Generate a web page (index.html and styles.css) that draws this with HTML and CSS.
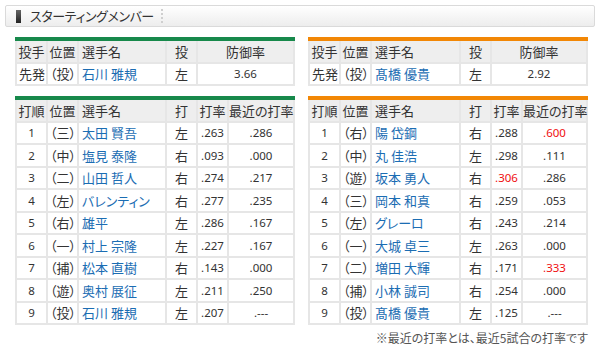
FILE: index.html
```html
<!DOCTYPE html>
<html lang="ja">
<head>
<meta charset="utf-8">
<link rel="stylesheet" href="styles.css">
</head>
<body>
<div class="page">
  <div class="title"><span class="bar"></span><span class="ttl">スターティングメンバー</span><span class="sep"></span></div>
  <div class="cols">
    <div class="col green">
      <table class="tbl">
        <colgroup><col class="w31"><col class="w31"><col class="w88"><col class="w31"><col></colgroup>
        <tr><th>投手</th><th>位置</th><th class="l">選手名</th><th>投</th><th>防御率</th></tr>
        <tr><td class="l">先発</td><td class="l">（投）</td><td class="name">石川 雅規</td><td>左</td><td class="num">3.66</td></tr>
      </table>
      <table class="tbl">
        <colgroup><col class="w31"><col class="w31"><col class="w88"><col class="w31"><col class="w31"><col></colgroup>
        <tr><th>打順</th><th>位置</th><th class="l">選手名</th><th>打</th><th>打率</th><th>最近の打率</th></tr>
        <tr><td class="num">1</td><td class="l">（三）</td><td class="name">太田 賢吾</td><td>左</td><td class="num">.263</td><td class="num">.286</td></tr>
        <tr><td class="num">2</td><td class="l">（中）</td><td class="name">塩見 泰隆</td><td>右</td><td class="num">.093</td><td class="num">.000</td></tr>
        <tr><td class="num">3</td><td class="l">（二）</td><td class="name">山田 哲人</td><td>右</td><td class="num">.274</td><td class="num">.217</td></tr>
        <tr><td class="num">4</td><td class="l">（左）</td><td class="name">バレンティン</td><td>右</td><td class="num">.277</td><td class="num">.235</td></tr>
        <tr><td class="num">5</td><td class="l">（右）</td><td class="name">雄平</td><td>左</td><td class="num">.286</td><td class="num">.167</td></tr>
        <tr><td class="num">6</td><td class="l">（一）</td><td class="name">村上 宗隆</td><td>左</td><td class="num">.227</td><td class="num">.167</td></tr>
        <tr><td class="num">7</td><td class="l">（捕）</td><td class="name">松本 直樹</td><td>右</td><td class="num">.143</td><td class="num">.000</td></tr>
        <tr><td class="num">8</td><td class="l">（遊）</td><td class="name">奥村 展征</td><td>左</td><td class="num">.211</td><td class="num">.250</td></tr>
        <tr><td class="num">9</td><td class="l">（投）</td><td class="name">石川 雅規</td><td>左</td><td class="num">.207</td><td class="num">.---</td></tr>
      </table>
    </div>
    <div class="col orange">
      <table class="tbl">
        <colgroup><col class="w31"><col class="w31"><col class="w89"><col class="w31"><col></colgroup>
        <tr><th>投手</th><th>位置</th><th class="l">選手名</th><th>投</th><th>防御率</th></tr>
        <tr><td class="l">先発</td><td class="l">（投）</td><td class="name">髙橋 優貴</td><td>左</td><td class="num">2.92</td></tr>
      </table>
      <table class="tbl">
        <colgroup><col class="w31"><col class="w31"><col class="w89"><col class="w31"><col class="w31"><col></colgroup>
        <tr><th>打順</th><th>位置</th><th class="l">選手名</th><th>打</th><th>打率</th><th>最近の打率</th></tr>
        <tr><td class="num">1</td><td class="l">（右）</td><td class="name">陽 岱鋼</td><td>右</td><td class="num">.288</td><td class="num red">.600</td></tr>
        <tr><td class="num">2</td><td class="l">（中）</td><td class="name">丸 佳浩</td><td>左</td><td class="num">.298</td><td class="num">.111</td></tr>
        <tr><td class="num">3</td><td class="l">（遊）</td><td class="name">坂本 勇人</td><td>右</td><td class="num red">.306</td><td class="num">.286</td></tr>
        <tr><td class="num">4</td><td class="l">（三）</td><td class="name">岡本 和真</td><td>右</td><td class="num">.259</td><td class="num">.053</td></tr>
        <tr><td class="num">5</td><td class="l">（左）</td><td class="name">グレーロ</td><td>右</td><td class="num">.243</td><td class="num">.214</td></tr>
        <tr><td class="num">6</td><td class="l">（一）</td><td class="name">大城 卓三</td><td>左</td><td class="num">.263</td><td class="num">.000</td></tr>
        <tr><td class="num">7</td><td class="l">（二）</td><td class="name">増田 大輝</td><td>右</td><td class="num">.171</td><td class="num red">.333</td></tr>
        <tr><td class="num">8</td><td class="l">（捕）</td><td class="name">小林 誠司</td><td>右</td><td class="num">.254</td><td class="num">.000</td></tr>
        <tr><td class="num">9</td><td class="l">（投）</td><td class="name">髙橋 優貴</td><td>左</td><td class="num">.125</td><td class="num">.---</td></tr>
      </table>
    </div>
  </div>
  <p class="note">※最近の打率とは、最近5試合の打率です</p>
</div>
</body>
</html>
```
FILE: styles.css
```css
body {
  margin: 0;
  font-family: "Noto Sans CJK JP", sans-serif;
  color: #333;
  font-feature-settings: "palt";
  background: #fff;
}
.page {
  padding: 5px;
}
.title {
  height: 20px;
  border: 1px solid #dadada;
  border-radius: 2px;
  background: linear-gradient(#ffffff, #ededed);
  display: flex;
  align-items: center;
  padding-left: 10px;
}
.bar {
  width: 5px;
  height: 13px;
  background: linear-gradient(#666, #222);
  margin-right: 9px;
}
.ttl {
  font-size: 13px;
  letter-spacing: -0.4px;
  line-height: 20px;
  color: #333;
}
.sep {
  height: 14px;
  border-left: 2px dotted #cfcfcf;
  margin-left: 7px;
}
.cols {
  display: flex;
  gap: 13px;
  padding: 10px 0 0 10px;
}
.col {
  width: 280px;
  display: flex;
  flex-direction: column;
  gap: 10px;
}
.tbl {
  width: 280px;
  border-collapse: collapse;
  table-layout: fixed;
}
.w31 { width: 31px; }
.w88 { width: 88px; }
.w89 { width: 89px; }
.tbl th,
.tbl td {
  border: 2px solid #e6e6e6;
  height: 20px;
  padding: 0 2px;
  font-size: 13px;
  line-height: 18px;
  font-weight: normal;
  text-align: center;
  white-space: nowrap;
}
.tbl tr:nth-child(odd) th,
.tbl tr:nth-child(odd) td {
  height: 21px;
}
.tbl th {
  background: #eeeeee;
  padding: 0;
}
.tbl th.l { padding-left: 3px; }
.green .tbl th { border-top: 4px solid #17894b; }
.orange .tbl th { border-top: 4px solid #f28705; }
.tbl .l { text-align: left; }
.tbl .name {
  text-align: left;
  padding-left: 3px;
  color: #1b6db3;
}
.tbl .num {
  font-family: "Noto Sans", sans-serif;
  font-size: 11.5px;
}
.tbl .red { color: #f01010; }
.note {
  margin: 4px 7px 0 0;
  text-align: right;
  font-size: 12px;
  color: #555;
}
```
